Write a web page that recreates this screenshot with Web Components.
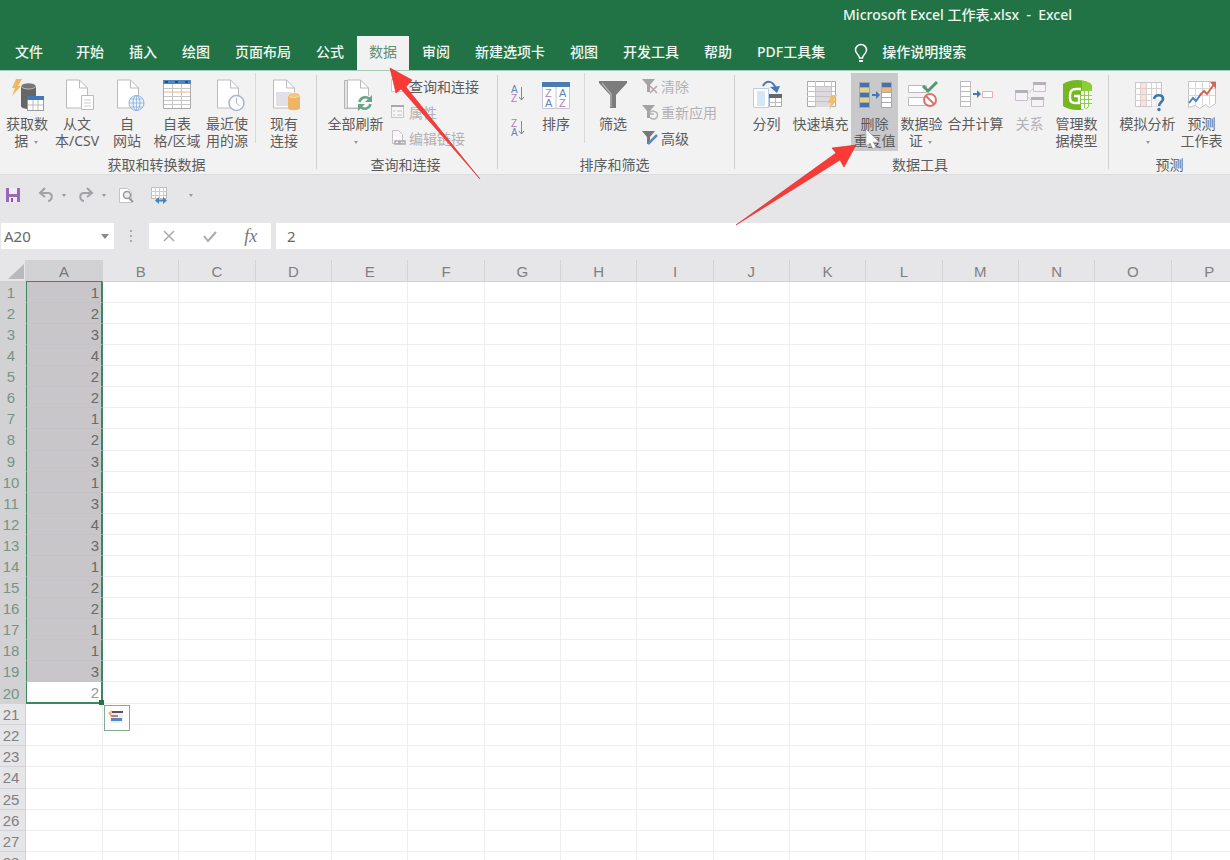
<!DOCTYPE html>
<html lang="zh-CN">
<head>
<meta charset="utf-8">
<title>Microsoft Excel 工作表.xlsx - Excel</title>
<style>
  html, body { margin: 0; height: 100%; }
  body { overflow: hidden; font: 14px/17px "Noto Sans", "Noto Sans CJK SC", sans-serif; color: #5c5c5c; background: #fff; }
</style>
</head>
<body>
<excel-app></excel-app>
<script>
const define = (name, html, setup) => customElements.define(name, class extends HTMLElement {
  constructor() {
    super();
    const t = document.createElement('template');
    t.innerHTML = html;
    this.attachShadow({ mode: 'open' }).append(t.content.cloneNode(true));
  }
  connectedCallback() { if (setup) setup(this, this.shadowRoot); }
});

const page = (x, y = 1) => `<path d="M${x} ${y}h13l8 8v20h-21z" fill="#fff" stroke="#bbb9bd"/><path d="M${x + 13} ${y}v8h8" fill="none" stroke="#bbb9bd"/>`;
const bars = (x, y, w, h, fills, stroke) => fills.map((f, i) => `<rect x="${x}" y="${y + i * h}" width="${w}" height="${h}" fill="${f}" stroke="${stroke}"/>`).join('');
const funnel = (c) => `<path d="M0 1h13l-5 6v7h-3V7z" fill="${c}"/>`;
const sortText = (a, b) => `<g font-family="Liberation Sans" font-size="10"><text x="0" y="7" fill="${a === 'A' ? '#5b87bd' : '#b37bbd'}">${a}</text><text x="0" y="16" fill="${b === 'A' ? '#5b87bd' : '#b37bbd'}">${b}</text></g><path d="M10.500 1v13M8 11l2.500 3 2.500-3" fill="none" stroke="#888"/>`;

const ICONS = {
  getdata: `<path d="M5 0h6l-4 7h3L1 17l3-8H1z" fill="#f0b765"/><path d="M10 7v20c0 4 15 4 15 0V7z" fill="#666"/><ellipse cx="17.500" cy="7" rx="7.500" ry="3" fill="#777" stroke="#eee" stroke-width=".6"/><rect x="16.500" y="17.500" width="16" height="14" fill="#fff" stroke="#999"/><path d="M16 17h17v4H16z" fill="#3f79b8"/><path d="M22 21v10M27 21v10M17 26h15" stroke="#bbb"/>`,
  text: page(5.5) + `<path d="M20.500 16.500h12v14h-12z" fill="#fff" stroke="#bbb9bd"/><path d="M23 21h7M23 24h7M23 27h7" stroke="#ccc"/>`,
  web: page(6.5) + `<circle cx="25.500" cy="24" r="7.500" fill="#eef4fb" stroke="#8eb2dc"/><ellipse cx="25.500" cy="24" rx="3.500" ry="7.500" fill="none" stroke="#8eb2dc"/><path d="M18 24h15M25.500 16.500v15M19.500 20h12M19.500 28h12" stroke="#8eb2dc" stroke-width=".8"/>`,
  table: `<path d="M2.500 2.500h27v27h-27z" fill="#fff" stroke="#aaa"/><path d="M2 1h28v4H2z" fill="#4f86c4"/><path d="M4 2h3v2H4zM14 2h3v2h-3zM24 2h3v2h-3z" fill="#245088"/><path d="M11.500 5v24M20.500 5v24M3 9.500h26M3 17.500h26M3 21.500h26M3 25.500h26" stroke="#c6c6c6"/><path d="M3 13h26" stroke="#f4b183"/>`,
  recent: page(6.5) + `<circle cx="25.500" cy="24" r="7.500" fill="#fff" stroke="#aab5d6" stroke-width="1.600"/><path d="M25.500 19v5l3 3" fill="none" stroke="#aab5d6"/>`,
  existing: page(5.5) + `<path d="M8 13h15v14H8z" fill="#e2e0e6"/><path d="M20 16v13c0 3 12 3 12 0V16z" fill="#eeb565"/><ellipse cx="26" cy="16" rx="6" ry="2.500" fill="#f3c382" stroke="#fff" stroke-width=".5"/>`,
  refresh: `<path d="M4.500 1.500h16v28h-16z" fill="#e4e3e5" stroke="#b5b5b5"/>` + page(7.5) + `<circle cx="25" cy="24" r="8" fill="#f8f8f8"/><path d="M19.500 23a6 6 0 0 1 10-3M30.500 25a6 6 0 0 1-10 3" fill="none" stroke="#67a588" stroke-width="2.600"/><path d="M32 16v7h-7zM18 32v-7h7z" fill="#67a588"/>`,
  sort: `<path d="M2.500 4.500h27v25h-27z" fill="#fff" stroke="#c9c2cf"/><path d="M2 3h28v5H2z" fill="#4a7cb2"/><path d="M16 8v21" stroke="#c9c2cf"/><g font-family="Liberation Sans" font-size="11"><text x="5" y="18" fill="#b37bbd">Z</text><text x="5" y="28" fill="#5b87bd">A</text><text x="19" y="18" fill="#5b87bd">A</text><text x="19" y="28" fill="#b37bbd">Z</text></g>`,
  filter: `<path d="M2 2h28v2L19 16v13h-6V16L2 4z" fill="#7c7c7c"/><path d="M5 4l9 11v13" fill="none" stroke="#aaa" stroke-width="1.500"/>`,
  split: `<path d="M2.500 9.500h15v19h-15z" fill="#fff" stroke="#b9cfe9"/><path d="M6 12h8v15H6z" fill="#d6e6f7"/><path d="M12 7c3-6 10-6 13 3" fill="none" stroke="#4679b0" stroke-width="2"/><path d="M19 8l10-1-3 7z" fill="#4679b0"/><path d="M18.500 15.500h12v12h-12z" fill="#fff" stroke="#aaa"/><path d="M18 15h13v4H18z" fill="#666"/><path d="M24.500 19v9M18 23.500h12" stroke="#bbb"/>`,
  flash: `<path d="M2.500 2.500h28v25h-28z" fill="#fff" stroke="#aaa"/><path d="M10 7h16v21H10z" fill="#dcdadd"/><path d="M2 7.500h28M2 12.500h28M2 17.500h28M2 22.500h28M10.500 2v26M19.500 2v5M26.500 2v26" stroke="#c4c4c4"/><path d="M26 16h6l-3 5h3l-8 10 2-7h-3z" fill="#f0be72"/>`,
  dedupe: bars(.5, 3.5, 10, 5, ['#3f74b0', '#e8cf85', '#3f74b0', '#e8cf85', '#3f74b0'], '#a8a8a8') + `<path d="M13 16h6" stroke="#4679b0" stroke-width="2"/><path d="M17 12l4 4-4 4z" fill="#4679b0"/>` + bars(22.5, 3.5, 10, 5, ['#3f74b0', '#f2b56b', '#fff', '#fff', '#fff'], '#a8a8a8'),
  validate: `<path d="M2.500 6.500h18v7h-18zM2.500 18.500h18v8h-18z" fill="#fff" stroke="#bbb"/><path d="M17 7l5 5 9-9" fill="none" stroke="#4e9a77" stroke-width="3"/><circle cx="24" cy="21" r="6" fill="#fff" stroke="#dc7467" stroke-width="2"/><path d="M20 17l8 8" stroke="#dc7467" stroke-width="2"/>`,
  merge: bars(.5, 2.5, 10, 5, ['#fff', '#fff', '#fff', '#fff', '#fff'], '#bbb') + `<path d="M13 15h5" stroke="#4679b0" stroke-width="2"/><path d="M17 11l4 4-4 4z" fill="#4679b0"/><path d="M22.500 12.500h10v6h-10z" fill="#fff" stroke="#eeaaaf"/>`,
  relation: `<path d="M13 15l7-6M13 17l5 5" stroke="#ccc"/><g fill="#f7f1f8" stroke="#c6c1c8"><path d="M1.500 11.500h12v10h-12zM19.500 3.500h12v9h-12zM17.500 18.500h12v9h-12z"/></g><path d="M1 11h13v3H1zM19 3h13v3H19zM17 18h13v3H17z" fill="#b5b2b7"/>`,
  model: `<path d="M2 5C9 0 20 0 27 3v26c-8 3-18 3-25-2z" fill="#74b71f"/><path d="M21 2c4 0 8 1 10 4v20l-10 4z" fill="#8ccf35"/><path d="M20 12h11v14l-8 4h-3z" fill="#fff"/><path d="M23.500 11v18M27.500 11v17M20 16.500h11M20 20.500h11M20 24.500h11" stroke="#8ccf50"/><path d="M20 10h-5c-4 0-6 2-6 6v3c0 4 2 5 5 5h4v-7h-5" fill="none" stroke="#fff" stroke-width="2.400"/>`,
  whatif: `<path d="M3.500 3.500h26v24h-26z" fill="#fff" stroke="#c8c5c8"/><path d="M9 4h5v23H9z" fill="#fde2cf"/><path d="M3 9.500h26M3 15.500h26M3 21.500h26M8.500 3v24M14.500 3v24M19.500 3v24M24.500 3v24" stroke="#d6d0d3"/><path d="M20 15h12v17H20z" fill="#f3f2f3" opacity=".7"/><path d="M22 20c1-5 9-5 9 0 0 3-4 3-4 7" fill="none" stroke="#3b77b0" stroke-width="2.600"/><circle cx="27" cy="30.500" r="1.700" fill="#3b77b0"/>`,
  forecast: `<path d="M2.500 2.500h27v22l-6 4-4-3-6 4-4-3-7 2z" fill="#fff" stroke="#c4c4c4"/><path d="M2 9.500h27M2 16.500h27M9.500 3v23M16.500 3v23M23.500 3v23" stroke="#d8d8d8"/><path d="M3 24l4-5 3 3 5-7" fill="none" stroke="#4c83bb" stroke-width="2"/><path d="M14 16l4-4 3 3 8-11" fill="none" stroke="#cc6a55" stroke-width="2"/><path d="M24 3h6v7z" fill="#cc6a55"/>`,
  az: sortText('A', 'Z'), za: sortText('Z', 'A'),
  pane: `<path d="M1.500 1.500h12v12h-12z" fill="#fff" stroke="#ccc"/>`,
  props: `<path d="M1.500 2.500h12v11h-12z" fill="#f7f5f7" stroke="#c8c5c8"/><path d="M1 1h13v2H1z" fill="#aaa8ac"/><path d="M3 7h2M7 7h5M3 11h2M7 11h5" stroke="#c4c4c4"/>`,
  editlink: `<path d="M2.500 .5h6l4 4v9h-10z" fill="#faf8fb" stroke="#c6c1c8"/><path d="M5 11h4v3H5zM10 11h5v3h-5z" fill="none" stroke="#aaa" stroke-width="1.500"/>`,
  clear: funnel('#a5a3a6') + `<path d="M8 8l7 7M15 8l-7 7" stroke="#b8a5ad" stroke-width="1.600"/>`,
  reapply: funnel('#a5a3a6') + `<path d="M9 8a4 4 0 1 1-1 5M8 6v4h4" fill="none" stroke="#b5b2b7" stroke-width="1.500"/>`,
  advanced: funnel('#777') + `<path d="M6 14l9-9" stroke="#5b87c8" stroke-width="2.500"/>`,
  bulb: `<path d="M5.500 13c0-3-4-4-4-8a5.500 5.500 0 0 1 11 0c0 4-4 5-4 8z" fill="none" stroke="#fff" stroke-width="1.500" transform="translate(1 1)"/><path d="M6 17h4" stroke="#fff" stroke-width="2"/>`,
  save: `<path d="M1 1h14v14H1z" fill="#9a68b8"/><path d="M4 1h8v6H4zM4 10h8v5H4z" fill="#f3ebf7"/><path d="M6 11h2v4H6z" fill="#8a55aa"/>`,
  undo: `<path d="M7 1L2 6l5 4M2 6h8c5 0 5 7 0 8" fill="none" stroke="#a3a1a5" stroke-width="2"/>`,
  redo: `<path d="M9 1l5 5-5 4M14 6H6c-5 0-5 7 0 8" fill="none" stroke="#a3a1a5" stroke-width="2"/>`,
  preview: `<path d="M1.500 1.500h8l4 4v10h-12z" fill="#fff" stroke="#c4c4c4"/><circle cx="9" cy="8" r="3.500" fill="#eee" stroke="#999" stroke-width="1.500"/><path d="M11 11l4 4" stroke="#999" stroke-width="2"/>`,
  width: `<path d="M.5 .5h15v11H.500z" fill="#fff" stroke="#bbb"/><path d="M4.500 0v12M8.500 0v12M12.500 0v12M0 4.500h15M0 8.500h15" stroke="#ccc"/><path d="M5 13.500h8" stroke="#4a83bd" stroke-width="2"/><path d="M8 10v7l-4-3.500zM12 10v7l4-3.500z" fill="#4a83bd"/>`,
  cross: `<path d="M3 3l10 10M13 3L3 13" stroke="#aaa" stroke-width="1.500"/>`,
  tick: `<path d="M2 8l4 5 8-9" fill="none" stroke="#aaa" stroke-width="2"/>`,
  analysis: `<path d="M2 3h13v10H2z" fill="#eee"/><path d="M4 1h11v2H4z" fill="#555"/><path d="M3 5h7v2H3z" fill="#d9766c"/><path d="M3 8h11v3H3z" fill="#4f8ac4"/><path d="M4 0L0 3l3 4z" fill="#efb865"/>`
};

define('x-icon', `<style>
  :host { display: block; flex: none; width: var(--size, 16px); height: var(--size, 16px); }
  svg { display: block; width: 100%; height: 100%; overflow: visible; }
</style><svg aria-hidden="true"></svg>`, (el, root) => {
  const size = el.getAttribute('box') || 16;
  el.style.setProperty('--size', size + 'px');
  const svg = root.querySelector('svg');
  svg.setAttribute('viewBox', `0 0 ${size} ${size}`);
  svg.innerHTML = ICONS[el.getAttribute('name')];
});

define('drop-caret', `<style>
  :host { display: inline-block; vertical-align: middle; width: 0; height: 0; margin: 0 2px; border: 2px solid transparent; border-top: 3px solid #999; border-bottom: 0; }
</style>`);

define('title-bar', `<style>
  :host { display: flex; height: 28px; margin-bottom: 2px; box-sizing: border-box; padding-right: 158px; align-items: center; justify-content: flex-end; color: #eef6f1; font-weight: 500; white-space: pre; }
</style><span>Microsoft Excel 工作表.xlsx  -  Excel</span>`);

define('ribbon-tab', `<style>
  :host { display: block; }
  :host([file]) { margin-right: 8px; }
  button { height: 34px; padding: 0 12px 3px; border: 0; background: none; color: #eff7f2; font: inherit; font-weight: 500; white-space: nowrap; }
  :host([active]) button { background: #f3f2f3; color: #5d8f76; font-weight: 400; }
</style><button role="tab"><slot></slot></button>`, (el, root) =>
  root.querySelector('button').setAttribute('aria-selected', el.hasAttribute('active')));

define('tab-bar', `<style>
  :host { display: flex; height: 40px; align-items: flex-end; padding-left: 3px; }
  nav { display: flex; gap: 1px; }
  .search { display: flex; align-items: center; gap: 13px; height: 34px; margin-left: 16px; padding: 0 0 3px; border: 0; background: none; color: #eff7f2; font: inherit; font-weight: 500; white-space: nowrap; }
</style><nav role="tablist">
  <ribbon-tab file>文件</ribbon-tab><ribbon-tab>开始</ribbon-tab><ribbon-tab>插入</ribbon-tab><ribbon-tab>绘图</ribbon-tab><ribbon-tab>页面布局</ribbon-tab><ribbon-tab>公式</ribbon-tab><ribbon-tab active>数据</ribbon-tab><ribbon-tab>审阅</ribbon-tab><ribbon-tab>新建选项卡</ribbon-tab><ribbon-tab>视图</ribbon-tab><ribbon-tab>开发工具</ribbon-tab><ribbon-tab>帮助</ribbon-tab><ribbon-tab>PDF工具集</ribbon-tab>
</nav><button class="search"><x-icon name="bulb"></x-icon>操作说明搜索</button>`);

define('ribbon-button', `<style>
  :host { display: block; flex: none; width: 50px; }
  :host([mid]) { width: 47px; }
  :host([wide]) { width: 61px; }
  button { display: flex; flex-direction: column; align-items: center; gap: 4px; width: 100%; height: 78px; padding: 6px 0 0; border: 0; background: none; color: inherit; font: inherit; white-space: nowrap; }
  :host([hot]) button { background: #c9c8ca; }
  :host([off]) button { color: #b2b0b3; }
</style><button><span class="label"><slot></slot></span></button>`, (el, root) => {
  const icon = document.createElement('x-icon');
  icon.setAttribute('box', 32);
  icon.setAttribute('name', el.getAttribute('icon'));
  root.querySelector('button').prepend(icon);
});

define('small-command', `<style>
  :host { display: block; }
  button { display: flex; align-items: center; gap: 3px; height: 26px; padding: 0; border: 0; background: none; color: inherit; font: inherit; white-space: nowrap; }
  :host([off]) button { color: #b2b0b3; }
</style><button><slot></slot></button>`, (el, root) => {
  const button = root.querySelector('button');
  const icon = document.createElement('x-icon');
  icon.setAttribute('name', el.getAttribute('icon'));
  button.prepend(icon);
  if (el.hasAttribute('label')) button.setAttribute('aria-label', el.getAttribute('label'));
});

define('ribbon-group', `<style>
  :host { display: flex; flex-direction: column; box-sizing: border-box; padding-top: 2px; position: relative; }
  .tools { display: flex; align-items: flex-start; height: 78px; padding-left: var(--lead, 8px); }
  .name { margin-top: 5px; text-align: center; line-height: 18px; padding-right: 4px; }
  :host([last]) .name { padding-right: 0; }
  :host(:not([last]))::after { content: ""; position: absolute; right: 0; top: 4px; bottom: 5px; width: 1px; background: #cfced0; }
</style><div class="tools"><slot></slot></div><div class="name"><slot name="name"></slot></div>`);

define('data-ribbon', `<style>
  :host { display: grid; grid-template-columns: 317px 181px 237px 374px 1fr; height: 105px; box-sizing: border-box; border-top: 1px solid #a5ccb7; border-bottom: 1px solid #dddcde; background: #f3f2f3; overflow: hidden; }
  .get { --lead: 2px; }
  .sort { --lead: 13px; }
  .list { display: flex; flex-direction: column; margin-left: 4px; }
  .rule { width: 1px; height: 70px; margin: 0 3px; background: #dad9db; }
  .az { gap: 8px; padding-top: 8px; width: 20px; margin-left: 0; }
</style>
<ribbon-group class="get">
  <ribbon-button icon="getdata">获取数<br>据 <drop-caret></drop-caret></ribbon-button>
  <ribbon-button icon="text">从文<br>本/CSV</ribbon-button>
  <ribbon-button icon="web">自<br>网站</ribbon-button>
  <ribbon-button icon="table">自表<br>格/区域</ribbon-button>
  <ribbon-button icon="recent">最近使<br>用的源</ribbon-button>
  <i class="rule"></i>
  <ribbon-button icon="existing">现有<br>连接</ribbon-button>
  <span slot="name">获取和转换数据</span>
</ribbon-group>
<ribbon-group>
  <ribbon-button wide icon="refresh">全部刷新<br><drop-caret></drop-caret></ribbon-button>
  <div class="list">
    <small-command icon="pane">查询和连接</small-command>
    <small-command off icon="props">属性</small-command>
    <small-command off icon="editlink">编辑链接</small-command>
  </div>
  <span slot="name">查询和连接</span>
</ribbon-group>
<ribbon-group class="sort">
  <div class="list az"><small-command icon="az" label="升序"></small-command><small-command icon="za" label="降序"></small-command></div>
  <ribbon-button icon="sort">排序</ribbon-button>
  <i class="rule"></i>
  <ribbon-button icon="filter">筛选</ribbon-button>
  <div class="list">
    <small-command off icon="clear">清除</small-command>
    <small-command off icon="reapply">重新应用</small-command>
    <small-command icon="advanced">高级</small-command>
  </div>
  <span slot="name">排序和筛选</span>
</ribbon-group>
<ribbon-group>
  <ribbon-button mid icon="split">分列</ribbon-button>
  <ribbon-button wide icon="flash">快速填充</ribbon-button>
  <ribbon-button mid hot icon="dedupe">删除<br>重复值</ribbon-button>
  <ribbon-button mid icon="validate">数据验<br>证 <drop-caret></drop-caret></ribbon-button>
  <ribbon-button wide icon="merge">合并计算</ribbon-button>
  <ribbon-button mid off icon="relation">关系</ribbon-button>
  <ribbon-button mid icon="model">管理数<br>据模型</ribbon-button>
  <span slot="name">数据工具</span>
</ribbon-group>
<ribbon-group last>
  <ribbon-button wide icon="whatif">模拟分析<br><drop-caret></drop-caret></ribbon-button>
  <ribbon-button mid icon="forecast">预测<br>工作表</ribbon-button>
  <span slot="name">预测</span>
</ribbon-group>`);

define('quick-access', `<style>
  :host { display: flex; align-items: center; height: 40px; padding-left: 5px; }
  button { display: block; padding: 0; border: 0; background: none; }
  .undo { margin-left: 17px; }
  .caret { margin: 0 10px 0 8px; }
  .redo { margin-left: 2px; }
  .view { margin-left: 2px; }
  .size { margin-left: 17px; }
  .more { margin-left: 22px; }
</style>
<button aria-label="保存"><x-icon name="save"></x-icon></button>
<button class="undo" aria-label="撤消"><x-icon name="undo"></x-icon></button><drop-caret class="caret"></drop-caret>
<button class="redo" aria-label="恢复"><x-icon name="redo"></x-icon></button><drop-caret class="caret"></drop-caret>
<button class="view" aria-label="打印预览"><x-icon name="preview"></x-icon></button>
<button class="size" aria-label="列宽"><x-icon name="width"></x-icon></button>
<drop-caret class="more"></drop-caret>`);

define('formula-bar', `<style>
  :host { display: flex; height: 26px; margin: 8px 0 11px 1px; font-size: 15px; }
  .box { display: flex; align-items: center; background: #fff; box-sizing: border-box; }
  input { min-width: 0; border: 0; padding: 0; outline: 0; background: none; color: #666; font: inherit; }
  button { border: 0; padding: 0; background: none; width: 41px; display: flex; justify-content: center; color: #777; }
  .ref { width: 113px; padding-left: 3px; }
  .ref input { flex: 1; }
  .ref button { width: 19px; }
  .dots { display: flex; width: 35px; align-items: center; justify-content: center; }
  .acts { width: 122px; }
  .fx { font: italic 18px "Liberation Serif", serif; }
  .text { flex: 1; margin-left: 5px; padding-left: 11px; }
  .text input { flex: 1; }
</style>
<div class="box ref"><input aria-label="名称框" value="A20"><button aria-label="名称列表"><svg width="8" height="5" aria-hidden="true"><path d="M0 0h8L4 5z" fill="#888"/></svg></button></div>
<div class="dots"><svg width="3" height="14" aria-hidden="true"><path d="M0 1h2v2H0zM0 6h2v2H0zM0 11h2v2H0z" fill="#aaa"/></svg></div>
<div class="box acts"><button aria-label="取消"><x-icon name="cross"></x-icon></button><button aria-label="输入"><x-icon name="tick"></x-icon></button><button class="fx">fx</button></div>
<div class="box text"><input aria-label="编辑栏" value="2"></div>`);

define('sheet-grid', `<style>
  :host { display: block; min-height: 0; overflow: hidden; font: 15px/18px "Liberation Sans", sans-serif; }
  table { width: calc(100% + 18px); height: calc(100% + 13px); table-layout: fixed; border-spacing: 0; background: #fff; color: #777; }
  th, td { box-sizing: border-box; padding: 2px 0 0; border: 0 solid #eeedef; border-width: 0 1px 1px 0; font-weight: 400; height: 21px; }
  th { background: #e6e5e8; border-color: #d3d2d5; color: #808080; }
  thead th { height: 22px; padding-top: 3px; border-color: #d8d7da #d3d2d5 #d0cfd2; }
  .side { width: 26px; }
  .first { width: 77px; }
  tbody th { padding-right: 3px; border-right-color: #d0cfd2; }
  th.on { background: #d2d1d4; color: #789485; }
  thead th.on { color: #777; border-bottom-color: #3e8660; }
  td.on { position: relative; background: #c8c6c9; border-color: #c4c2c6; border-left: 1px solid #3e8660; border-right: 2px solid #3e8660; padding-right: 2px; text-align: right; color: #6a6a6a; }
  td.end { background: #fff; border-bottom: 2px solid #3e8660; color: #999; }
  .handle { position: absolute; right: -3px; bottom: -3px; width: 5px; height: 5px; background: #217346; }
  .quick { position: absolute; left: 100%; top: 100%; margin: 3px 0 0 3px; width: 26px; height: 26px; padding: 3px; border: 1px solid #7fae95; background: #fff; }
  .corner { vertical-align: bottom; }
  .corner svg { display: block; margin: 0 0 2px 8px; }
</style>
<table><thead><tr></tr></thead><tbody></tbody></table>`, (el, root) => {
  const values = [1, 2, 3, 4, 2, 2, 1, 2, 3, 1, 3, 4, 3, 1, 2, 2, 1, 1, 3, 2];
  const letters = [...'ABCDEFGHIJKLMNOP'];
  root.querySelector('thead tr').innerHTML =
    `<th class="side corner" aria-label="全选"><svg width="16" height="15" aria-hidden="true"><path d="M16 0v15H0z" fill="#b9b8bb"/></svg></th>` +
    letters.map((l, i) => `<th scope="col" class="${i ? '' : 'first on'}">${l}</th>`).join('');
  let rows = '';
  for (let r = 1; r <= 28; r++) {
    const on = r <= values.length, end = r === values.length;
    const extra = end ? '<i class="handle"></i><button class="quick" aria-label="快速分析"><x-icon name="analysis"></x-icon></button>' : '';
    rows += `<tr><th scope="row" class="${on ? 'on' : ''}">${r}</th><td class="${on ? 'on' : ''} ${end ? 'end' : ''}">${on ? values[r - 1] : ''}${extra}</td>${'<td></td>'.repeat(15)}</tr>`;
  }
  root.querySelector('tbody').innerHTML = rows;
});

define('pointer-marks', `<style>
  :host { position: absolute; left: 0; top: 0; pointer-events: none; }
  svg { display: block; overflow: visible; }
</style><svg width="1" height="1" aria-hidden="true">
  <path d="M866 129v17l4-3 3 6 3-2-3-5h6z" fill="#fff" stroke="#999" stroke-width=".6"/>
  <g fill="#f93a37" stroke="#d22f2d" stroke-width=".6"><path d="M390 68l22 12-6 7 74 92-79-90-5 4z"/><path d="M856 145l-24 3 4 5-100 72 104-65 4 7z"/></g>
</svg>`);

define('excel-app', `<style>
  :host { position: relative; display: grid; grid-template-rows: auto auto auto 1fr; height: 100vh; background: #e6e5e8; overflow: hidden; }
  header { background: #217346; }
</style>
<header><title-bar></title-bar><tab-bar></tab-bar></header>
<data-ribbon></data-ribbon>
<div><quick-access></quick-access><formula-bar></formula-bar></div>
<sheet-grid></sheet-grid>
<pointer-marks></pointer-marks>`);
</script>
</body>
</html>
